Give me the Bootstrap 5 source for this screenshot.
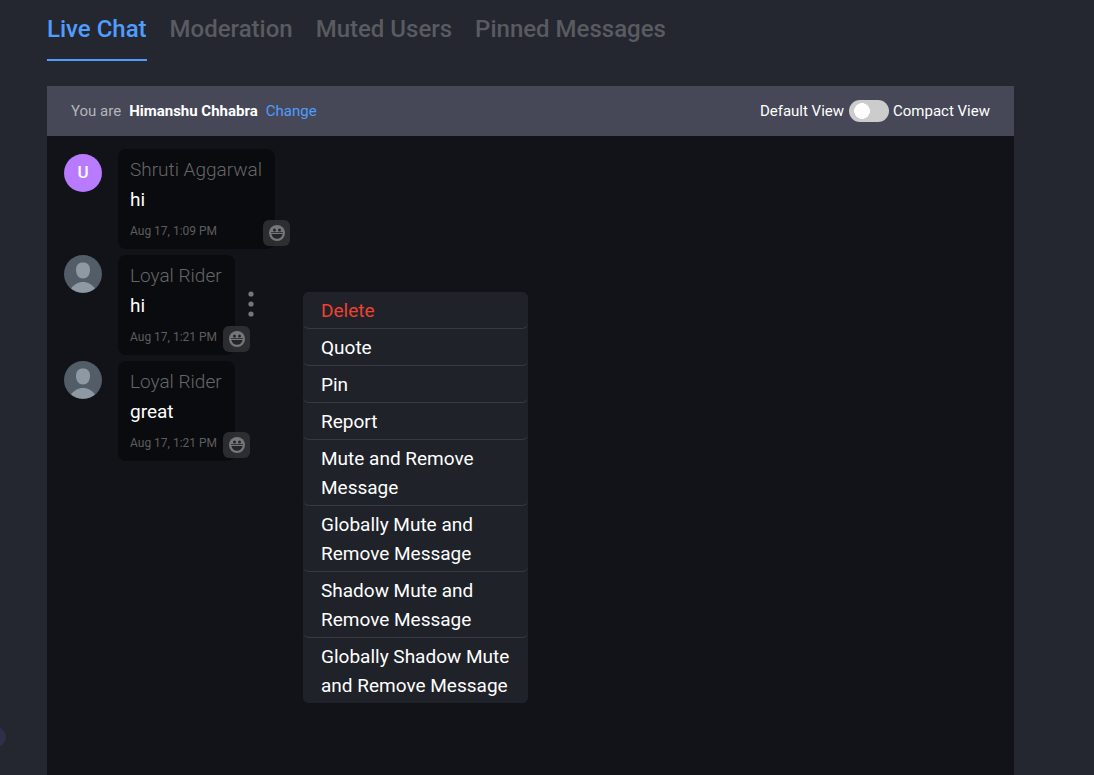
<!DOCTYPE html>
<html lang="en">
<head>
<meta charset="utf-8">
<meta name="viewport" content="width=device-width, initial-scale=1">
<title>Live Chat</title>
<link href="https://cdn.jsdelivr.net/npm/bootstrap@5.3.0/dist/css/bootstrap.min.css" rel="stylesheet">
<style>
body{background:#24272f;color:#fff;font-family:Roboto,"Liberation Sans",sans-serif;font-size:19px;overflow-x:hidden}
.shell{min-height:100vh;padding:0 80px 0 47px;overflow:hidden}
.tabs{gap:23px;padding-top:11px;margin-bottom:25px}
.tabs .nav-link{padding:0 0 11px;font-size:24px;line-height:37px;font-weight:500;color:#595b61;border-bottom:2px solid transparent}
.tabs .nav-link.active{color:#519cff;border-color:#519cff}
.chat-panel{background:#121318}
.chat-bar{background:#464857;min-height:50px;padding:0 24px;font-size:15px}
.chat-bar a{color:#519cff}
.you{color:#b4b5bb}
.chat-bar .view-switch{width:40px;height:22px;margin:0 4px 0 5px;border:0;float:none;background-color:#ccc;background-size:16px;background-position:5px center;background-image:radial-gradient(circle closest-side,#fff 96%,transparent);background-repeat:no-repeat}
.feed{padding:13px 17px;gap:6px}
.who{width:38px;height:38px;margin-right:16px}
.initial{background:#b87afe;font-size:17px;font-weight:500;margin-top:5px}
.bubble{background:#0a0b0e;border-radius:8px;padding:6px 12px;min-width:117px;min-height:100px}
.author{color:#666668;font-weight:300;line-height:30px;padding-right:1px}
.said{line-height:30px}
.stamp{color:#5d5d5f;font-size:12px;line-height:24px;padding-top:4px}
.react{width:27px;height:26px;right:-15px;bottom:3px;background:rgba(56,57,61,.72);border-radius:6px}
.more{right:-22px;top:35px;width:12px;height:28px}
.actions{top:37px;left:185px;width:225px;background:#1f2229;border-radius:6px;z-index:3}
.actions button{background:#1f2229;color:#fff;line-height:29px;padding:4px 12px 3px 18px;border:0;border-bottom:1px solid #373a40;border-radius:6px}
.actions li:last-child button{border-bottom:0}
.actions .delete{color:#f0412f}
.orb{left:-14px;top:727px;width:20px;height:20px;background:#2d3048}
</style>
</head>
<body>
<svg class="d-none" aria-hidden="true">
<symbol id="person" viewBox="0 0 38 38"><circle cx="19" cy="19" r="19" fill="#525d67"/><path d="M12 15c0-5 2.500-7.500 7-7.500S26 10 26 15c0 5-3 8.500-7 8.500S12 20 12 15z" fill="#8e99a4"/><path d="M7 33.500C10 29.500 14 27 19 27s9 2.500 12 6.500A19 19 0 0 1 7 33.500z" fill="#8e99a4"/></symbol>
<symbol id="grin" viewBox="0 0 16 16"><circle cx="8" cy="8" r="8" fill="#77777b"/><path d="M2 7.500h12" stroke="#242529" stroke-width=".8"/><circle cx="5.500" cy="5" r="1.500" fill="#242529"/><circle cx="10.500" cy="5" r="1.500" fill="#242529"/><path d="M2.400 9h11.200c-.6 2.900-2.700 4.800-5.600 4.800S3 11.900 2.400 9z" fill="#242529"/></symbol>
</svg>
<div class="shell d-flex flex-column position-relative">
<span class="orb position-absolute rounded-circle"></span>
<nav class="tabs nav">
<a class="nav-link active" href="#">Live Chat</a>
<a class="nav-link" href="#">Moderation</a>
<a class="nav-link" href="#">Muted Users</a>
<a class="nav-link" href="#">Pinned Messages</a>
</nav>
<main class="chat-panel flex-grow-1">
<header class="chat-bar d-flex justify-content-between align-items-center">
<div class="d-flex gap-2"><span class="you">You are</span><strong>Himanshu Chhabra</strong><a class="text-decoration-none" href="#">Change</a></div>
<div class="d-flex align-items-center"><label for="view">Default View</label><input class="form-check-input view-switch rounded-pill" type="checkbox" role="switch" id="view"><label for="view">Compact View</label></div>
</header>
<section class="feed d-flex flex-column align-items-start">
<article class="d-flex align-items-start">
<span class="who initial rounded-circle d-flex align-items-center justify-content-center">U</span>
<div class="bubble position-relative"><div class="author">Shruti Aggarwal</div><div class="said">hi</div><div class="stamp">Aug 17, 1:09 PM</div>
<button class="react btn p-0 border-0 position-absolute d-flex align-items-center justify-content-center" aria-label="React"><svg width="16" height="16"><use href="#grin"/></svg></button></div>
</article>
<article class="d-flex align-items-start">
<svg class="who"><use href="#person"/></svg>
<div class="bubble position-relative"><div class="author">Loyal Rider</div><div class="said">hi</div><div class="stamp">Aug 17, 1:21 PM</div>
<button class="react btn p-0 border-0 position-absolute d-flex align-items-center justify-content-center" aria-label="React"><svg width="16" height="16"><use href="#grin"/></svg></button>
<button class="more btn p-0 border-0 position-absolute d-flex" aria-label="Message actions"><svg width="12" height="28" fill="#77777a"><circle cx="6" cy="4" r="2.600"/><circle cx="6" cy="14" r="2.600"/><circle cx="6" cy="24" r="2.600"/></svg></button>
<ul class="actions list-unstyled m-0 position-absolute">
<li><button class="delete w-100 text-start d-block">Delete</button></li>
<li><button class="w-100 text-start d-block">Quote</button></li>
<li><button class="w-100 text-start d-block">Pin</button></li>
<li><button class="w-100 text-start d-block">Report</button></li>
<li><button class="w-100 text-start d-block">Mute and Remove Message</button></li>
<li><button class="w-100 text-start d-block">Globally Mute and Remove Message</button></li>
<li><button class="w-100 text-start d-block">Shadow Mute and Remove Message</button></li>
<li><button class="w-100 text-start d-block">Globally Shadow Mute and Remove Message</button></li>
</ul></div>
</article>
<article class="d-flex align-items-start">
<svg class="who"><use href="#person"/></svg>
<div class="bubble position-relative"><div class="author">Loyal Rider</div><div class="said">great</div><div class="stamp">Aug 17, 1:21 PM</div>
<button class="react btn p-0 border-0 position-absolute d-flex align-items-center justify-content-center" aria-label="React"><svg width="16" height="16"><use href="#grin"/></svg></button></div>
</article>
</section>
</main>
</div>
<script src="https://cdn.jsdelivr.net/npm/bootstrap@5.3.0/dist/js/bootstrap.bundle.min.js"></script>
</body>
</html>
